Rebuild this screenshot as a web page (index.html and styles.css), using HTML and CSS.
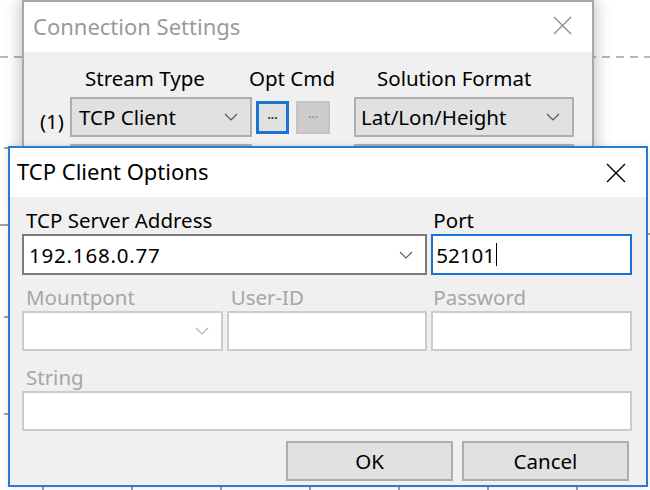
FILE: index.html
```html
<!DOCTYPE html>
<html lang="en">
<head>
  <meta charset="UTF-8">
  <title>TCP Client Options</title>
  <link rel="stylesheet" href="styles.css">
</head>
<body>

  <!-- Plot behind the dialogs: grid, dashed level line, axis ticks -->
  <div class="chart">
    <div class="dash-line"></div>
    <div class="axis-left"></div>
    <div class="axis-right"></div>
  </div>

  <!-- Parent dialog (inactive) -->
  <div class="window conn">
    <div class="titlebar">
      <span class="title">Connection Settings</span>
      <svg class="close" width="19" height="19" viewBox="0 0 19 19">
        <path d="M1 1 L18 18 M18 1 L1 18" stroke="#8f8f8f" stroke-width="1.4" fill="none"/>
      </svg>
    </div>
    <div class="conn-body">
      <div class="hdr col-type">Stream Type</div>
      <div class="hdr col-opt">Opt Cmd</div>
      <div class="hdr col-fmt">Solution Format</div>

      <div class="row-num">(1)</div>
      <div class="drop">
        <span>TCP Client</span>
        <svg width="14" height="8" viewBox="0 0 14 8"><path d="M1 1 L7 7 L13 1" stroke="#555" stroke-width="1.2" fill="none"/></svg>
      </div>
      <div class="dots-btn focused">...</div>
      <div class="dots-btn disabled">...</div>
      <div class="drop wide">
        <span>Lat/Lon/Height</span>
        <svg width="14" height="8" viewBox="0 0 14 8"><path d="M1 1 L7 7 L13 1" stroke="#555" stroke-width="1.2" fill="none"/></svg>
      </div>

      <!-- second stream row, hidden under the options dialog -->
      <div class="row-num"></div>
      <div class="drop"></div>
      <div class="dots-btn"></div>
      <div class="dots-btn"></div>
      <div class="drop wide"></div>
    </div>
  </div>

  <!-- Active dialog -->
  <div class="window tcp">
    <div class="titlebar">
      <span class="title">TCP Client Options</span>
      <svg class="close" width="20" height="20" viewBox="0 0 20 20">
        <path d="M1 1 L19 19 M19 1 L1 19" stroke="#000" stroke-width="1.4" fill="none"/>
      </svg>
    </div>
    <div class="tcp-body">
      <div class="field span2">
        <label>TCP Server Address</label>
        <div class="box combo active">
          <span class="addr">192.168.0.77</span>
          <svg width="14" height="8" viewBox="0 0 14 8"><path d="M1 1 L7 7 L13 1" stroke="#606060" stroke-width="1.2" fill="none"/></svg>
        </div>
      </div>
      <div class="field port">
        <label>Port</label>
        <div class="box focus"><span>52101</span><i class="caret"></i></div>
      </div>

      <div class="field off gap-a">
        <label>Mountpont</label>
        <div class="box combo">
          <span></span>
          <svg width="14" height="8" viewBox="0 0 14 8"><path d="M1 1 L7 7 L13 1" stroke="#b4b4b4" stroke-width="1.2" fill="none"/></svg>
        </div>
      </div>
      <div class="field off gap-a">
        <label>User-ID</label>
        <div class="box"></div>
      </div>
      <div class="field off gap-a port">
        <label>Password</label>
        <div class="box"></div>
      </div>

      <div class="field off span3 gap-b">
        <label>String</label>
        <div class="box"></div>
      </div>

      <div class="actions span3">
        <button class="btn">OK</button>
        <button class="btn">Cancel</button>
      </div>
    </div>
  </div>

</body>
</html>
```

FILE: styles.css
```css
* {
  box-sizing: border-box;
}

body {
  margin: 0;
  width: 650px;
  height: 490px;
  overflow: hidden;
  position: relative;
  background: #fff;
  font-family: "Noto Sans", "Open Sans", sans-serif;
  font-size: 20.5px;
  color: #000;
}

/* Chart layer */
.chart {
  position: absolute;
  inset: 0;
  background: repeating-linear-gradient(90deg, transparent 0 42px, #9c9c9c 42px 44px, transparent 44px 89px);
}

.dash-line {
  position: absolute;
  left: 0;
  right: 0;
  top: 56px;
  height: 2px;
  background: repeating-linear-gradient(90deg, #b8b8b8 0 8px, transparent 8px 14px);
}

.axis-left {
  position: absolute;
  left: 0;
  top: 0;
  width: 9px;
  height: 100%;
  background:
    linear-gradient(#a0a0a0, #a0a0a0) 4px 147px / 5px 2px no-repeat,
    linear-gradient(#a0a0a0, #a0a0a0) 0 224px / 9px 2px no-repeat,
    linear-gradient(#a0a0a0, #a0a0a0) 4px 316px / 5px 2px no-repeat,
    linear-gradient(#a0a0a0, #a0a0a0) 4px 413px / 5px 2px no-repeat;
}

.axis-right {
  position: absolute;
  right: 0;
  top: 233px;
  width: 3px;
  height: 2px;
  background: #a0a0a0;
}

/* Windows */
.window {
  position: absolute;
  background: #f0f0f0;
  display: flex;
  flex-direction: column;
}

.titlebar {
  background: #fff;
  display: flex;
  align-items: center;
  justify-content: space-between;
  flex-shrink: 0;
}

.title {
  font-size: 22px;
  padding-bottom: 3px;
}

.conn {
  left: 22px;
  top: 0;
  width: 572px;
  height: 210px;
  border: 2px solid #a8a8a8;
  box-shadow: 0 0 16px rgba(0, 0, 0, 0.3);
}

.conn .titlebar {
  height: 50px;
  padding: 0 20px 0 9px;
}

.conn .close {
  margin-bottom: 3px;
}

.conn .title {
  color: #9a9a9a;
}

.conn-body {
  display: grid;
  grid-template-columns: 46px 186px 40px 58px 220px;
  align-items: center;
  padding-top: 13px;
}

.hdr {
  line-height: 26px;
  margin-bottom: 6px;
}

.col-type {
  grid-column: 2;
  padding-left: 15px;
}

.col-opt {
  grid-column: 3 / 5;
  margin-left: -7px;
}

.col-fmt {
  grid-column: 5;
  padding-left: 23px;
}

.row-num {
  text-align: right;
  padding-right: 6px;
}

.drop {
  width: 182px;
  height: 40px;
  background: #e1e1e1;
  border: 2px solid #adadad;
  display: flex;
  align-items: center;
  justify-content: space-between;
  padding: 0 12px 0 7px;
  margin-bottom: 7px;
}

.drop.wide {
  width: 220px;
  padding-left: 5px;
}

.dots-btn {
  width: 33px;
  height: 33px;
  background: #e1e1e1;
  border: 2px solid #adadad;
  font-size: 12px;
  font-weight: bold;
  text-align: center;
  line-height: 22px;
  color: #333;
  margin-bottom: 7px;
}

.dots-btn.focused {
  border: 3px solid #1a73d0;
}

.dots-btn.disabled {
  width: 34px;
  background: #cccccc;
  border-color: #c4c4c4;
  color: #9a9a9a;
}

.tcp {
  left: 8px;
  top: 146px;
  width: 640px;
  height: 341px;
  border: 2px solid #2c7bd2;
  box-shadow: 0 0 6px rgba(0, 0, 0, 0.12);
}

.tcp .titlebar {
  height: 49px;
  padding: 0 20px 0 7px;
}

.tcp-body {
  display: grid;
  grid-template-columns: repeat(3, 1fr);
  column-gap: 4px;
  padding: 11px 14px 0 12px;
}

.span2 {
  grid-column: span 2;
}

.span3 {
  grid-column: 1 / -1;
}

.field label {
  display: block;
  line-height: 24px;
  margin-bottom: 2px;
  padding-left: 4px;
}

.field.port label {
  padding-left: 2px;
}

.field.off label {
  color: #a6a6a6;
}

.gap-a {
  margin-top: 10px;
}

.gap-b {
  margin-top: 14px;
}

.box {
  height: 40px;
  background: #fff;
  border: 2px solid #cccccc;
  display: flex;
  align-items: center;
  padding: 0 5px;
}

.box.combo {
  justify-content: space-between;
  padding-right: 12px;
}

.box.active {
  height: 41px;
  border-color: #7a7a7a;
}

.addr {
  letter-spacing: 0.8px;
}

.box.focus {
  height: 41px;
  border-color: #1a73d0;
  padding-left: 3px;
}

.caret {
  display: inline-block;
  width: 1px;
  height: 23px;
  background: #000;
  margin-left: 1px;
}

.actions {
  display: flex;
  justify-content: flex-end;
  gap: 9px;
  margin-top: 10px;
  padding-right: 3px;
}

.btn {
  width: 167px;
  height: 40px;
  background: #e1e1e1;
  border: 2px solid #adadad;
  font-family: inherit;
  font-size: 20.5px;
  color: #000;
  padding: 0;
}
```
